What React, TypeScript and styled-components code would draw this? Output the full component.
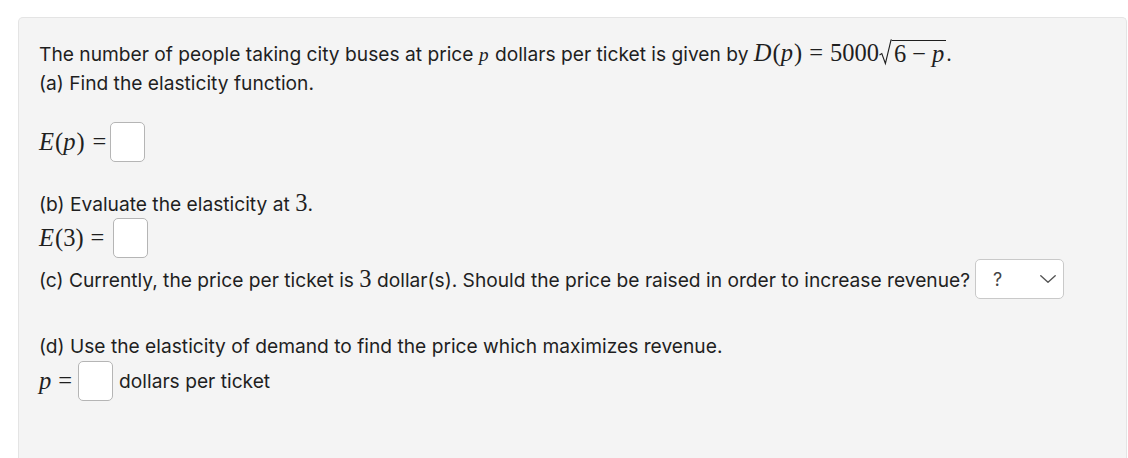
import styled, { createGlobalStyle } from "styled-components"

const GlobalStyle = createGlobalStyle`
  body {
    margin: 0;
    background: #ffffff;
    font-family: Inter, "Open Sans", "Liberation Sans", sans-serif;
    color: #1f1f1f;
  }
`

export default function App() {
  return (
    <>
      <GlobalStyle />
      <Panel>
        <Line>
          The number of people taking city buses at price <Var>p</Var> dollars
          per ticket is given by{" "}
          <Math>
            <Var>D</Var>(<Var>p</Var>)<Op>=</Op>5000
            <Radical>
              <RadicalSign viewBox="0 0 13 27" aria-hidden>
                <path
                  d="M0.5 16 L2.8 14.6 L6.4 24.5 L12 1 L13 1"
                  fill="none"
                  stroke="#1f1f1f"
                  strokeWidth="1.1"
                />
              </RadicalSign>
              <Radicand>
                6<Op $thin>−</Op>
                <Var>p</Var>
              </Radicand>
            </Radical>
          </Math>
          .
        </Line>
        <Line>(a) Find the elasticity function.</Line>

        <AnswerRow $top={23}>
          <Math>
            <Var>E</Var>(<Var>p</Var>)<Op $tight>=</Op>
          </Math>
          <AnswerBox />
        </AnswerRow>

        <Line $top={25}>
          (b) Evaluate the elasticity at <Math>3</Math>.
        </Line>
        <AnswerRow>
          <Math>
            <Var>E</Var>(3)<Op>=</Op>
          </Math>
          <AnswerBox />
        </AnswerRow>

        <AnswerRow $top={1}>
          <span>
            (c) Currently, the price per ticket is <Math>3</Math> dollar(s).
            Should the price be raised in order to increase revenue?
          </span>
          <Select>
            <span>?</span>
            <Chevron viewBox="0 0 16 8" aria-hidden>
              <path
                d="M0.8 0.8 L8 7.2 L15.2 0.8"
                fill="none"
                stroke="#555"
                strokeWidth="1.4"
                strokeLinecap="round"
                strokeLinejoin="round"
              />
            </Chevron>
          </Select>
        </AnswerRow>

        <Line $top={33} $height={28}>
          (d) Use the elasticity of demand to find the price which maximizes
          revenue.
        </Line>
        <AnswerRow $height={41}>
          <Math>
            <Var>p</Var>
            <Op $short>=</Op>
          </Math>
          <AnswerBox />
          <Unit>dollars per ticket</Unit>
        </AnswerRow>
      </Panel>
    </>
  )
}

const Panel = styled.div`
  margin: 17px 1px 0 18px;
  padding: 19px 20px 0 20px;
  min-height: 430px;
  background: #f4f4f4;
  border: 1px solid #e4e4e4;
  border-bottom: none;
  border-radius: 5px 5px 0 0;
  font-size: 19.2px;
`

const Line = styled.div<{ $top?: number; $height?: number }>`
  height: ${(p) => p.$height ?? 31}px;
  line-height: ${(p) => p.$height ?? 31}px;
  margin-top: ${(p) => p.$top ?? 0}px;
  white-space: nowrap;
`

const AnswerRow = styled.div<{ $top?: number; $height?: number }>`
  display: flex;
  align-items: center;
  height: ${(p) => p.$height ?? 40}px;
  margin-top: ${(p) => p.$top ?? 0}px;
  white-space: nowrap;
`

const Math = styled.span`
  font-family: "Liberation Serif", "DejaVu Serif", serif;
  font-size: 24.5px;
  white-space: nowrap;
`

const Var = styled.i`
  font-family: "Liberation Serif", "DejaVu Serif", serif;
  font-style: italic;
  padding-right: 1px;
`

const Op = styled.span<{ $tight?: boolean; $thin?: boolean; $short?: boolean }>`
  margin: ${(p) =>
    p.$tight
      ? "0 2px 0 8px"
      : p.$thin
        ? "0 6px"
        : p.$short
          ? "0 4px 0 6px"
          : "0 7px"};
`

const Radical = styled.span`
  display: inline-flex;
  align-items: flex-end;
  vertical-align: -5px;
`

const RadicalSign = styled.svg`
  width: 13px;
  height: 27px;
  display: block;
`

const Radicand = styled.span`
  border-top: 1.1px solid #1f1f1f;
  line-height: 25px;
  padding: 0 1px 0 2px;
`

const AnswerBox = styled.span`
  display: inline-block;
  box-sizing: border-box;
  width: 35px;
  height: 40px;
  background: #ffffff;
  border: 1px solid #b5b5b5;
  border-radius: 5px;
  margin-left: 2px;
`

const Select = styled.span`
  display: inline-flex;
  align-items: center;
  justify-content: space-between;
  box-sizing: border-box;
  width: 89px;
  height: 40px;
  margin-left: 5px;
  padding: 0 7px 0 17px;
  background: #ffffff;
  border: 1px solid #c9c9c9;
  border-radius: 5px;
  color: #444;
  font-size: 18px;
`

const Chevron = styled.svg`
  width: 16px;
  height: 8px;
  display: block;
`

const Unit = styled.span`
  margin-left: 6px;
`
